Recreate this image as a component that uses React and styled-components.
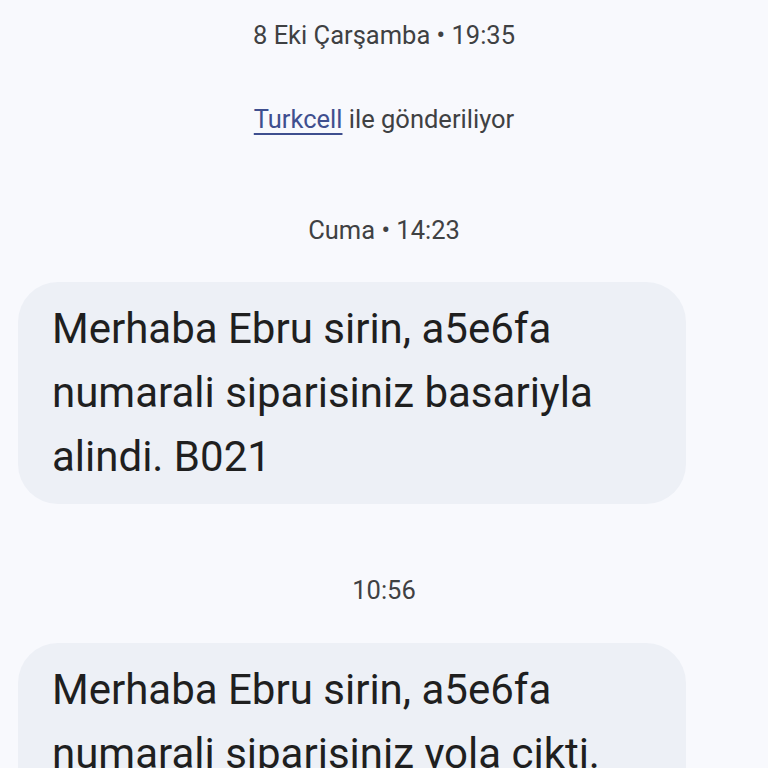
import React from "react";
import styled, { createGlobalStyle } from "styled-components";

const Global = createGlobalStyle`
  html, body {
    margin: 0;
    padding: 0;
    background: #f8f9fd;
    font-family: Roboto, "Noto Sans", sans-serif;
  }
`;

const Thread = styled.div`
  height: 768px;
  overflow: hidden;
  display: flex;
  flex-direction: column;
  padding: 0 18px;
  box-sizing: border-box;
`;

const Stamp = styled.div`
  text-align: center;
  font-size: 25.5px;
  line-height: 30px;
  color: #3f4143;
  margin-top: ${(p) => p.top}px;
`;

const Carrier = styled.a`
  color: #3f4f8f;
  text-decoration: underline;
  text-underline-offset: 5px;
  text-decoration-thickness: 1.5px;
`;

const Bubble = styled.div`
  width: 668px;
  flex-shrink: 0;
  box-sizing: border-box;
  background: #edf0f6;
  border-radius: 40px;
  padding: 15px 34px 15px;
  margin-top: ${(p) => p.top}px;
  font-size: 42px;
  line-height: 64px;
  color: #1f1f1f;
`;

export default function App() {
  return (
    <>
      <Global />
      <Thread>
        <Stamp top={20}>8 Eki Çarşamba • 19:35</Stamp>
        <Stamp top={54}>
          <Carrier>Turkcell</Carrier> ile gönderiliyor
        </Stamp>
        <Stamp top={81}>Cuma • 14:23</Stamp>
        <Bubble top={37}>
          Merhaba Ebru sirin, a5e6fa numarali siparisiniz basariyla alindi.
          B021
        </Bubble>
        <Stamp top={71}>10:56</Stamp>
        <Bubble top={38}>
          Merhaba Ebru sirin, a5e6fa numarali siparisiniz yola cikti.
          Kargo takip no: 1234567890
        </Bubble>
      </Thread>
    </>
  );
}
